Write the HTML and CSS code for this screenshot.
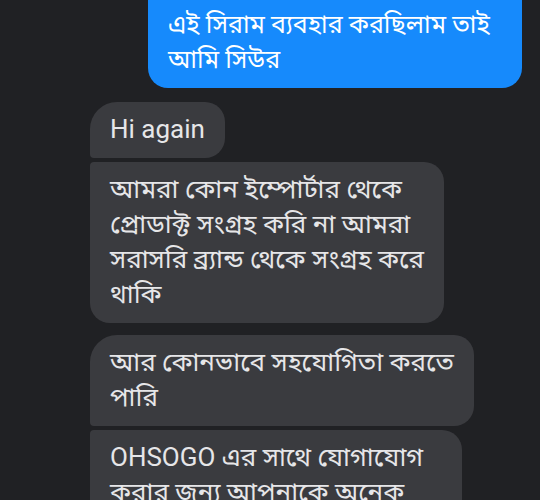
FILE: index.html
```html
<!DOCTYPE html>
<html lang="bn">
<head>
<meta charset="utf-8">
<title>Chat</title>
<link rel="stylesheet" href="styles.css">
</head>
<body>
<div class="chat">
  <div class="row out">
    <div class="bubble blue">আমি আগে আপনাদের থেকে কেনা<br>এই সিরাম ব্যবহার করছিলাম তাই<br>আমি সিউর</div>
  </div>
  <div class="row in first">
    <div class="bubble gray top">Hi again</div>
  </div>
  <div class="row in">
    <div class="bubble gray bottom">আমরা কোন ইম্পোর্টার থেকে<br>প্রোডাক্ট সংগ্রহ করি না আমরা<br>সরাসরি ব্র্যান্ড থেকে সংগ্রহ করে<br>থাকি</div>
  </div>
  <div class="row in gap">
    <div class="bubble gray top">আর কোনভাবে সহযোগিতা করতে<br>পারি</div>
  </div>
  <div class="row in">
    <div class="bubble gray mid wide">OHSOGO এর সাথে যোগাযোগ<br>করার জন্য আপনাকে অনেক<br>ধন্যবাদ</div>
  </div>
</div>
</body>
</html>
```
FILE: styles.css
```css
html, body {
  margin: 0;
  padding: 0;
  background: #202124;
  height: 100%;
  overflow: hidden;
}
.chat {
  display: flex;
  flex-direction: column;
  margin-top: -38px;
  padding: 0 18px 0 90px;
  font-family: Roboto, "Noto Sans Bengali", "Noto Sans", sans-serif;
  font-size: 26px;
  line-height: 35px;
}
.row {
  display: flex;
}
.row.out {
  justify-content: flex-end;
}
.row.in {
  justify-content: flex-start;
  margin-top: 4px;
}
.row.in.first {
  margin-top: 14px;
}
.row.in.gap {
  margin-top: 12px;
}
.bubble {
  padding: 10px 20px 11px 20px;
  white-space: nowrap;
}
.blue {
  background: #168afc;
  color: #ffffff;
  border-radius: 20px;
  width: 334px;
  font-size: 25px;
}
.gray {
  background: #3a3b3f;
  color: #e6e6e8;
}
.gray.top {
  border-radius: 27px 20px 20px 4px;
}
.gray.bottom {
  border-radius: 4px 20px 20px 20px;
}
.gray.mid {
  border-radius: 4px 20px 20px 4px;
}
.gray.wide {
  min-width: 332px;
}
```
